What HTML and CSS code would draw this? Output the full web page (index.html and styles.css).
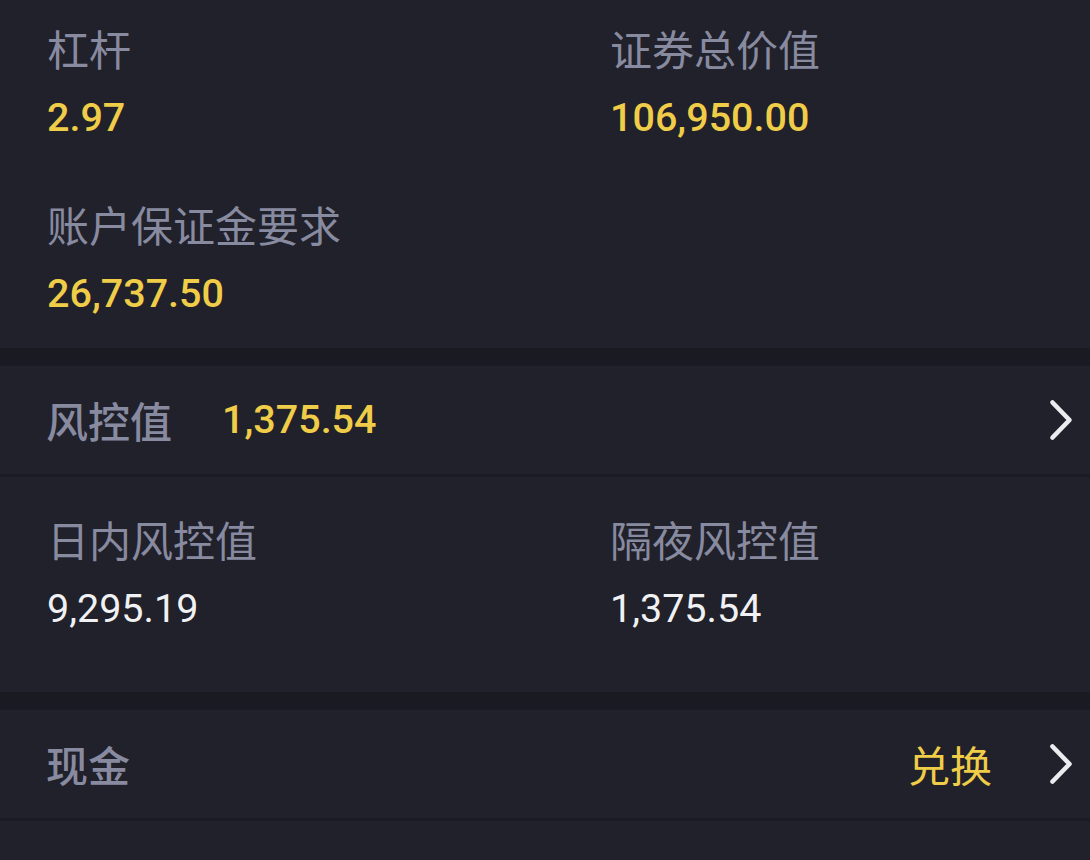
FILE: index.html
```html
<!DOCTYPE html>
<html lang="zh-CN">
<head>
<meta charset="utf-8">
<title>风控</title>
<link rel="stylesheet" href="styles.css">
</head>
<body>
<main class="page">
  <section class="panel panel-top">
    <div class="grid">
      <div class="item">
        <div class="label">杠杆</div>
        <div class="value yellow">2.97</div>
      </div>
      <div class="item">
        <div class="label">证券总价值</div>
        <div class="value yellow">106,950.00</div>
      </div>
      <div class="item">
        <div class="label">账户保证金要求</div>
        <div class="value yellow">26,737.50</div>
      </div>
    </div>
  </section>

  <div class="gap"></div>

  <div class="row">
    <span class="row-label">风控值</span>
    <span class="row-value yellow">1,375.54</span>
    <span class="spacer"></span>
    <svg class="chev" viewBox="0 0 24 42" width="24" height="42"><polyline points="3.5,3.5 20.5,21 3.5,38.5" fill="none" stroke="#ececf0" stroke-width="4.6" stroke-linecap="round" stroke-linejoin="round"/></svg>
  </div>

  <section class="panel panel-mid">
    <div class="grid">
      <div class="item">
        <div class="label">日内风控值</div>
        <div class="value white">9,295.19</div>
      </div>
      <div class="item">
        <div class="label">隔夜风控值</div>
        <div class="value white">1,375.54</div>
      </div>
    </div>
  </section>

  <div class="gap"></div>

  <div class="row">
    <span class="row-label">现金</span>
    <span class="spacer"></span>
    <span class="action yellow-text">兑换</span>
    <svg class="chev" viewBox="0 0 24 42" width="24" height="42"><polyline points="3.5,3.5 20.5,21 3.5,38.5" fill="none" stroke="#ececf0" stroke-width="4.6" stroke-linecap="round" stroke-linejoin="round"/></svg>
  </div>

  <div class="tail"></div>
</main>
</body>
</html>
```

FILE: styles.css
```css
html, body {
  margin: 0;
  padding: 0;
  background: #20212a;
}

body {
  width: 1090px;
  height: 860px;
  overflow: hidden;
  font-family: "Noto Sans CJK SC", "Noto Sans", sans-serif;
}

.page {
  display: flex;
  flex-direction: column;
}

.panel {
  background: #20212a;
  padding-left: 47px;
}

.panel-top {
  padding-top: 23px;
  padding-bottom: 29px;
}

.panel-mid {
  padding-top: 37px;
  padding-bottom: 58px;
}

.grid {
  display: grid;
  grid-template-columns: 563px 1fr;
  row-gap: 56px;
}

.label {
  font-size: 42px;
  line-height: 50px;
  color: #888aa0;
  white-space: nowrap;
}

.value {
  margin-top: 20px;
  font-family: Roboto, "Liberation Sans", sans-serif;
  font-size: 39.5px;
  line-height: 50px;
  white-space: nowrap;
}

.yellow {
  color: #f0cd48;
  font-weight: 500;
}

.yellow-text {
  color: #f0cd48;
}

.white {
  color: #f1f1f4;
  font-weight: 400;
}

.gap {
  height: 18px;
  background: #1a1b22;
}

.row {
  display: flex;
  align-items: center;
  height: 108px;
  padding: 0 17px 0 46px;
  background: #20212a;
  border-bottom: 3px solid #1b1c23;
}

.row-label {
  font-size: 42px;
  line-height: 50px;
  color: #888aa0;
  font-weight: 500;
}

.row-value {
  margin-left: 50px;
  font-family: Roboto, "Liberation Sans", sans-serif;
  font-size: 39.5px;
  line-height: 50px;
}

.spacer {
  flex: 1;
}

.action {
  font-size: 42px;
  line-height: 50px;
  font-weight: 400;
  margin-right: 57px;
}

.chev {
  display: block;
  flex: none;
}

.tail {
  height: 40px;
  background: #20212a;
}
```
